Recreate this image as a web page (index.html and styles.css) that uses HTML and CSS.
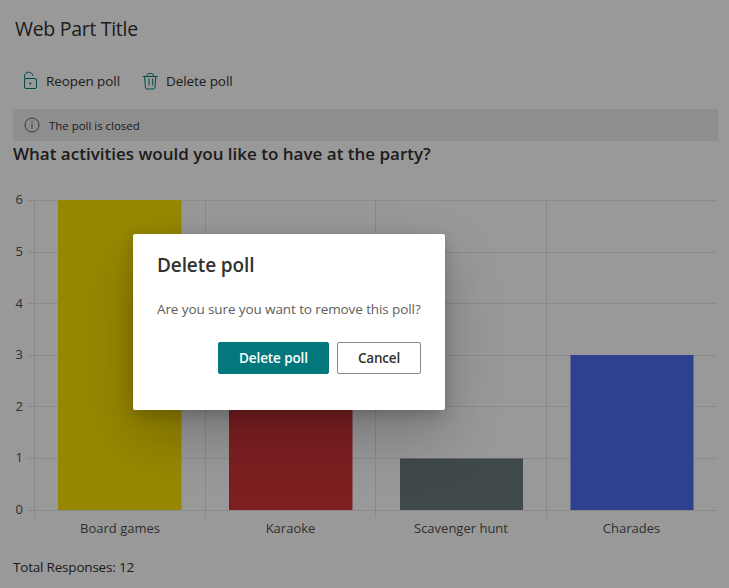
FILE: index.html
```html
<!DOCTYPE html>
<html>
<head>
    <title>Poll</title>
    <link rel="stylesheet" href="styles.css">
</head>
<body>
    <div class="webpart">
        <h1 class="wp-title">Web Part Title</h1>
        <div class="toolbar">
            <button class="cmd">
                <svg class="cmd-icon" width="16" height="20" viewBox="0 0 16 20">
                    <rect x="2.500" y="7.500" width="12" height="10" rx="1.500" />
                    <path d="M2.500 7.500V5.200C2.500 2.800 4.400 1.200 6.600 1.200s4.100 1.500 4.300 3.800" />
                    <circle class="solid" cx="8.300" cy="12.500" r="1" />
                </svg>
                Reopen poll
            </button>
            <button class="cmd">
                <svg class="cmd-icon" width="16" height="20" viewBox="0 0 16 20">
                    <path d="M.7 5.500h15M5.200 5.500V4.200C5.200 3.200 6 2.500 7 2.500h2.400c1 0 1.800.7 1.800 1.700v1.300" />
                    <path d="M2.500 5.500l1 11.300c.1.700.6 1.200 1.400 1.200h6.600c.8 0 1.300-.5 1.400-1.200l1-11.300" />
                    <path d="M7 7.500v7M10.700 7.500v7" />
                </svg>
                Delete poll
            </button>
        </div>
        <div class="msgbar">
            <svg class="msg-icon" width="16" height="16" viewBox="0 0 16 16">
                <circle cx="8" cy="8" r="7" />
                <path d="M8 7v4.600" />
                <circle class="solid" cx="8" cy="4.800" r=".8" />
            </svg>
            <span>The poll is closed</span>
        </div>
        <h2 class="question">What activities would you like to have at the party?</h2>

        <svg class="chart" width="729" height="367" viewBox="0 173 729 367">
            <g class="grid">
                <path d="M27 200.500H717M27 252.500H717M27 303.500H717M27 355.500H717M27 406.500H717M27 458.500H717M27 510.500H717" />
                <path d="M34.500 200V518M205.500 200V518M375.500 200V518M546.500 200V518" />
            </g>
            <rect x="58" y="200" width="123.500" height="310" fill="#fce100" />
            <rect x="229" y="303" width="123.500" height="207" fill="#d13438" />
            <rect x="400" y="458.500" width="123" height="51.500" fill="#69797e" />
            <rect x="570.500" y="355" width="123" height="155" fill="#4f6bed" />
            <g class="y-labels">
                <text x="23" y="204">6</text>
                <text x="23" y="256">5</text>
                <text x="23" y="308">4</text>
                <text x="23" y="359">3</text>
                <text x="23" y="411">2</text>
                <text x="23" y="462">1</text>
                <text x="23" y="514">0</text>
            </g>
            <g class="x-labels">
                <text x="120" y="533">Board games</text>
                <text x="290.500" y="533">Karaoke</text>
                <text x="461" y="533">Scavenger hunt</text>
                <text x="631.500" y="533">Charades</text>
            </g>
        </svg>

        <div class="total">Total Responses: 12</div>
    </div>

    <div class="overlay"></div>
    <div class="dialog">
        <div class="dialog-title">Delete poll</div>
        <p class="dialog-text">Are you sure you want to remove this poll?</p>
        <div class="dialog-actions">
            <button class="btn btn-primary">Delete poll</button>
            <button class="btn">Cancel</button>
        </div>
    </div>
</body>
</html>
```

FILE: styles.css
```css
html, body { margin: 0; height: 100%; }
body { position: relative; overflow: hidden; background: #fff; color: #323130; font-family: "Open Sans", "Noto Sans", sans-serif; }

.webpart { height: 588px; padding: 0 0 0 13px; box-sizing: border-box; }
.wp-title { margin: 0; padding: 15px 0 0 2px; height: 58px; box-sizing: border-box; font-size: 19.500px; font-weight: 400; line-height: 28px; letter-spacing: -.3px; }

.toolbar { display: flex; height: 46px; align-items: center; padding-left: 9px; }
.cmd { display: flex; align-items: center; gap: 8px; padding: 0; margin-right: 22px; border: 0; background: none; color: #323130; font: inherit; font-size: 13.500px; letter-spacing: -.08px; }
.cmd-icon { fill: none; stroke: #03787c; stroke-width: 1; }
.cmd-icon .solid { fill: #03787c; stroke: none; }

.msgbar { display: flex; align-items: center; gap: 9px; width: 705px; height: 32px; padding-left: 11px; margin-top: 5px; box-sizing: border-box; background: #ededed; font-size: 11.500px; letter-spacing: -.03px; }
.msg-icon { fill: none; stroke: #605e5c; stroke-width: 1; }
.msg-icon .solid { fill: #605e5c; stroke: none; }

.question { margin: 0; height: 32px; font-size: 17px; font-weight: 600; line-height: 26px; }

.chart { display: block; margin-left: -13px; }
.grid path { fill: none; stroke: #e6e6e6; stroke-width: 1; }
.chart text { font-family: "Open Sans", "Noto Sans", sans-serif; font-size: 13px; fill: #505050; }
.y-labels text { text-anchor: end; }
.x-labels text { text-anchor: middle; }

.total { font-size: 13.500px; line-height: 18px; letter-spacing: -.2px; margin-top: 18px; }

.overlay { position: absolute; inset: 0; background: rgba(0, 0, 0, .4); }

.dialog { position: absolute; left: 133px; top: 234px; width: 312px; height: 176px; padding: 17px 24px 0; box-sizing: border-box; background: #fff; border-radius: 2px; box-shadow: 0 25.600px 57.600px rgba(0, 0, 0, .22), 0 4.800px 14.400px rgba(0, 0, 0, .18); }
.dialog-title { font-size: 19px; font-weight: 600; line-height: 28px; letter-spacing: -.1px; }
.dialog-text { margin: 20px 0 0; font-size: 13.500px; line-height: 20px; color: #605e5c; letter-spacing: -.1px; white-space: nowrap; }
.dialog-actions { display: flex; justify-content: flex-end; gap: 8px; margin-top: 23px; }
.btn { height: 32px; width: 84px; padding: 0; border: 1px solid #8a8886; border-radius: 2px; background: #fff; color: #323130; font: inherit; font-size: 13.500px; font-weight: 600; letter-spacing: -.2px; }
.btn-primary { width: 111px; border-color: #03787c; background: #03787c; color: #fff; letter-spacing: -.1px; }
```
